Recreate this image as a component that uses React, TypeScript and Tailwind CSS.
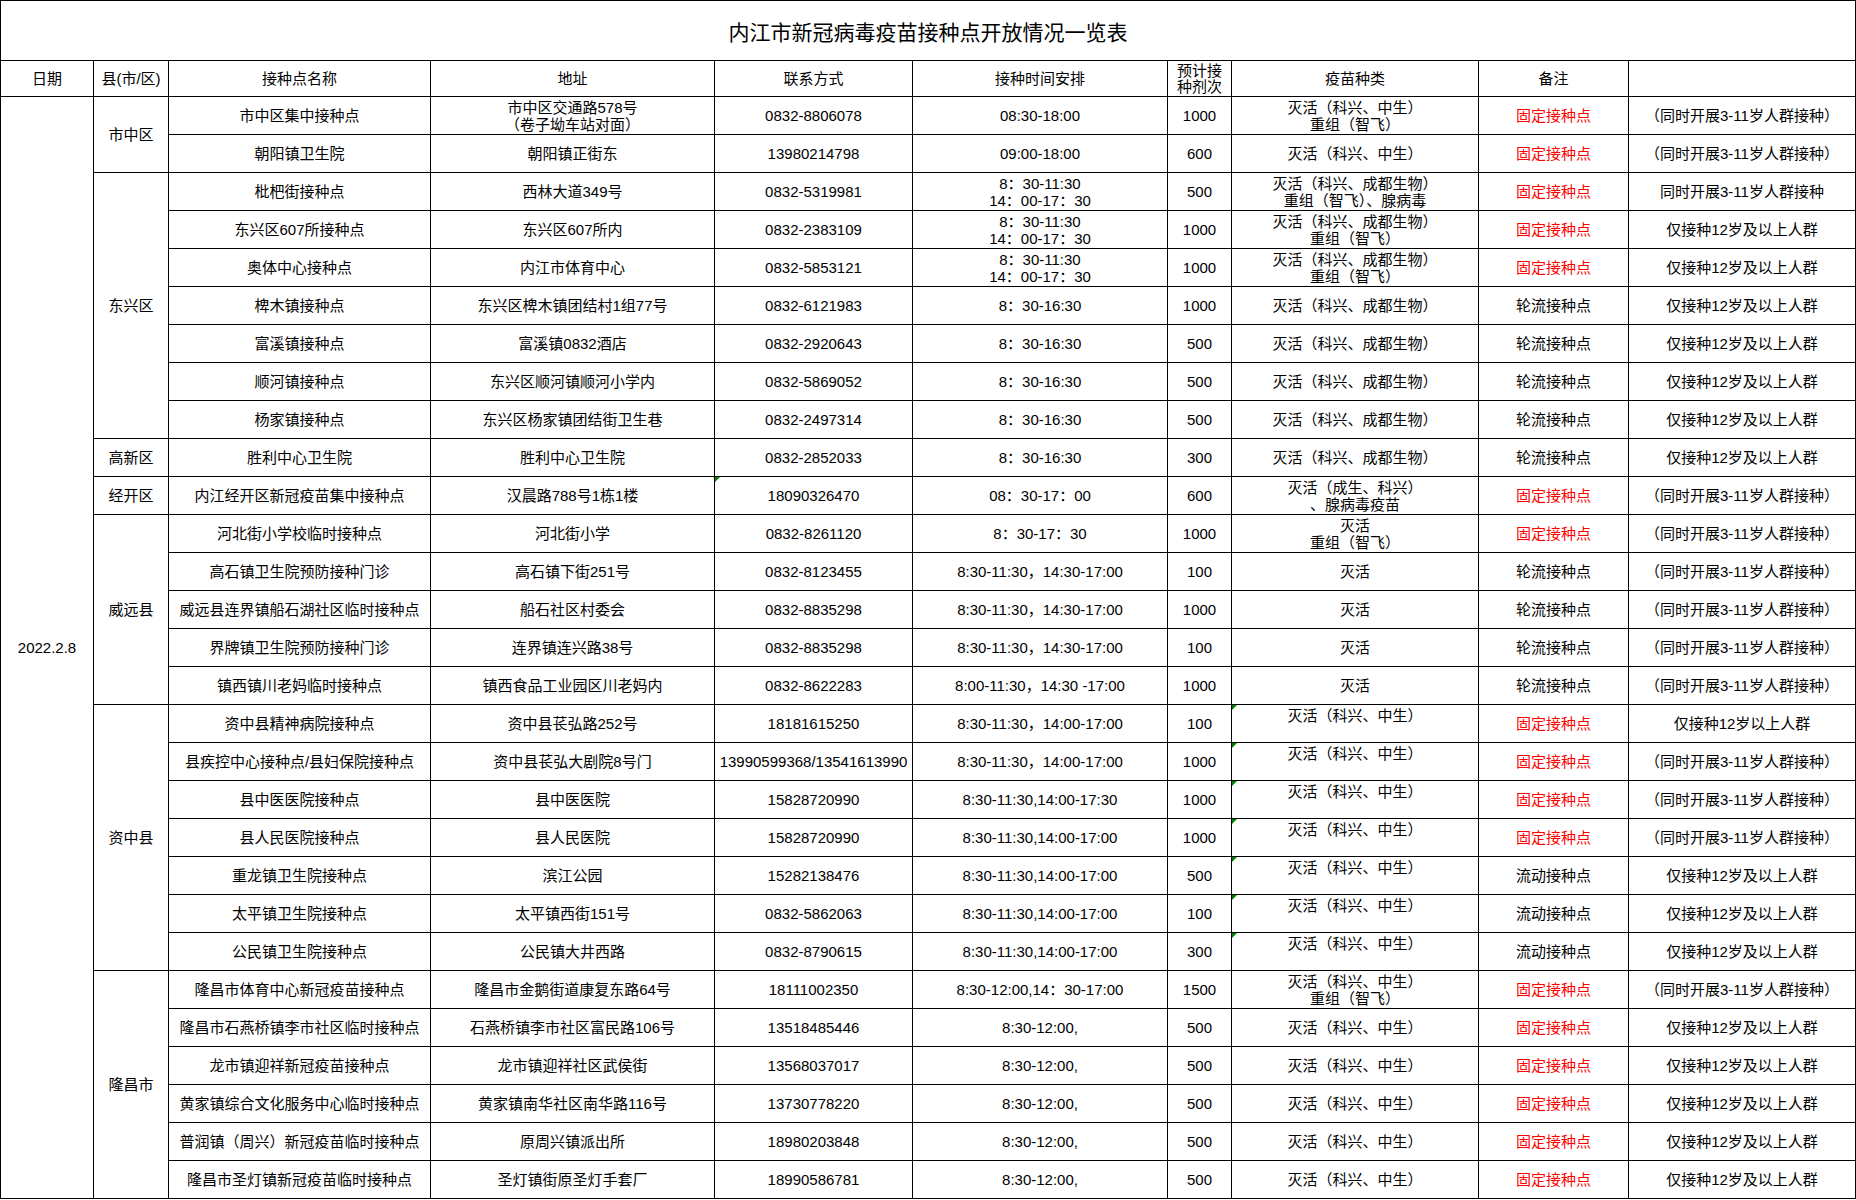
import React from 'react';

type Row = {
  name: string;
  addr: string[];
  tel: string;
  telMark?: boolean;
  time: string[];
  dose: string;
  vac: string[];
  vacMark?: boolean;
  kind: string;
  red?: boolean;
  note: string;
};

type Group = { county: string; span: string; rows: Row[] };

const KX_ZS = '灭活（科兴、中生）';
const KX_CD = '灭活（科兴、成都生物）';
const TONG = '（同时开展3-11岁人群接种）';
const JIN = '仅接种12岁及以上人群';
const GUDING = '固定接种点';
const LUNLIU = '轮流接种点';
const LIUDONG = '流动接种点';
const SPLIT = ['8：30-11:30', '14：00-17：30'];

const GROUPS: Group[] = [
  {
    county: '市中区',
    span: 'row-span-2',
    rows: [
      { name: '市中区集中接种点', addr: ['市中区交通路578号', '（卷子坳车站对面）'], tel: '0832-8806078', time: ['08:30-18:00'], dose: '1000', vac: [KX_ZS, '重组（智飞）'], kind: GUDING, red: true, note: TONG },
      { name: '朝阳镇卫生院', addr: ['朝阳镇正街东'], tel: '13980214798', time: ['09:00-18:00'], dose: '600', vac: [KX_ZS], kind: GUDING, red: true, note: TONG },
    ],
  },
  {
    county: '东兴区',
    span: 'row-span-7',
    rows: [
      { name: '枇杷街接种点', addr: ['西林大道349号'], tel: '0832-5319981', time: SPLIT, dose: '500', vac: [KX_CD, '重组（智飞）、腺病毒'], kind: GUDING, red: true, note: '同时开展3-11岁人群接种' },
      { name: '东兴区607所接种点', addr: ['东兴区607所内'], tel: '0832-2383109', time: SPLIT, dose: '1000', vac: [KX_CD, '重组（智飞）'], kind: GUDING, red: true, note: JIN },
      { name: '奥体中心接种点', addr: ['内江市体育中心'], tel: '0832-5853121', time: SPLIT, dose: '1000', vac: [KX_CD, '重组（智飞）'], kind: GUDING, red: true, note: JIN },
      { name: '椑木镇接种点', addr: ['东兴区椑木镇团结村1组77号'], tel: '0832-6121983', time: ['8：30-16:30'], dose: '1000', vac: [KX_CD], kind: LUNLIU, note: JIN },
      { name: '富溪镇接种点', addr: ['富溪镇0832酒店'], tel: '0832-2920643', time: ['8：30-16:30'], dose: '500', vac: [KX_CD], kind: LUNLIU, note: JIN },
      { name: '顺河镇接种点', addr: ['东兴区顺河镇顺河小学内'], tel: '0832-5869052', time: ['8：30-16:30'], dose: '500', vac: [KX_CD], kind: LUNLIU, note: JIN },
      { name: '杨家镇接种点', addr: ['东兴区杨家镇团结街卫生巷'], tel: '0832-2497314', time: ['8：30-16:30'], dose: '500', vac: [KX_CD], kind: LUNLIU, note: JIN },
    ],
  },
  {
    county: '高新区',
    span: 'row-span-1',
    rows: [
      { name: '胜利中心卫生院', addr: ['胜利中心卫生院'], tel: '0832-2852033', time: ['8：30-16:30'], dose: '300', vac: [KX_CD], kind: LUNLIU, note: JIN },
    ],
  },
  {
    county: '经开区',
    span: 'row-span-1',
    rows: [
      { name: '内江经开区新冠疫苗集中接种点', addr: ['汉晨路788号1栋1楼'], tel: '18090326470', telMark: true, time: ['08：30-17：00'], dose: '600', vac: ['灭活（成生、科兴）', '、腺病毒疫苗'], kind: GUDING, red: true, note: TONG },
    ],
  },
  {
    county: '威远县',
    span: 'row-span-5',
    rows: [
      { name: '河北街小学校临时接种点', addr: ['河北街小学'], tel: '0832-8261120', time: ['8：30-17：30'], dose: '1000', vac: ['灭活', '重组（智飞）'], kind: GUDING, red: true, note: TONG },
      { name: '高石镇卫生院预防接种门诊', addr: ['高石镇下街251号'], tel: '0832-8123455', time: ['8:30-11:30，14:30-17:00'], dose: '100', vac: ['灭活'], kind: LUNLIU, note: TONG },
      { name: '威远县连界镇船石湖社区临时接种点', addr: ['船石社区村委会'], tel: '0832-8835298', time: ['8:30-11:30，14:30-17:00'], dose: '1000', vac: ['灭活'], kind: LUNLIU, note: TONG },
      { name: '界牌镇卫生院预防接种门诊', addr: ['连界镇连兴路38号'], tel: '0832-8835298', time: ['8:30-11:30，14:30-17:00'], dose: '100', vac: ['灭活'], kind: LUNLIU, note: TONG },
      { name: '镇西镇川老妈临时接种点', addr: ['镇西食品工业园区川老妈内'], tel: '0832-8622283', time: ['8:00-11:30，14:30 -17:00'], dose: '1000', vac: ['灭活'], kind: LUNLIU, note: TONG },
    ],
  },
  {
    county: '资中县',
    span: 'row-span-7',
    rows: [
      { name: '资中县精神病院接种点', addr: ['资中县苌弘路252号'], tel: '18181615250', time: ['8:30-11:30，14:00-17:00'], dose: '100', vac: [KX_ZS, '\u00a0'], vacMark: true, kind: GUDING, red: true, note: '仅接种12岁以上人群' },
      { name: '县疾控中心接种点/县妇保院接种点', addr: ['资中县苌弘大剧院8号门'], tel: '13990599368/13541613990', time: ['8:30-11:30，14:00-17:00'], dose: '1000', vac: [KX_ZS, '\u00a0'], vacMark: true, kind: GUDING, red: true, note: TONG },
      { name: '县中医医院接种点', addr: ['县中医医院'], tel: '15828720990', time: ['8:30-11:30,14:00-17:30'], dose: '1000', vac: [KX_ZS, '\u00a0'], vacMark: true, kind: GUDING, red: true, note: TONG },
      { name: '县人民医院接种点', addr: ['县人民医院'], tel: '15828720990', time: ['8:30-11:30,14:00-17:00'], dose: '1000', vac: [KX_ZS, '\u00a0'], vacMark: true, kind: GUDING, red: true, note: TONG },
      { name: '重龙镇卫生院接种点', addr: ['滨江公园'], tel: '15282138476', time: ['8:30-11:30,14:00-17:00'], dose: '500', vac: [KX_ZS, '\u00a0'], vacMark: true, kind: LIUDONG, note: JIN },
      { name: '太平镇卫生院接种点', addr: ['太平镇西街151号'], tel: '0832-5862063', time: ['8:30-11:30,14:00-17:00'], dose: '100', vac: [KX_ZS, '\u00a0'], vacMark: true, kind: LIUDONG, note: JIN },
      { name: '公民镇卫生院接种点', addr: ['公民镇大井西路'], tel: '0832-8790615', time: ['8:30-11:30,14:00-17:00'], dose: '300', vac: [KX_ZS, '\u00a0'], vacMark: true, kind: LIUDONG, note: JIN },
    ],
  },
  {
    county: '隆昌市',
    span: 'row-span-6',
    rows: [
      { name: '隆昌市体育中心新冠疫苗接种点', addr: ['隆昌市金鹅街道康复东路64号'], tel: '18111002350', time: ['8:30-12:00,14：30-17:00'], dose: '1500', vac: [KX_ZS, '重组（智飞）'], kind: GUDING, red: true, note: TONG },
      { name: '隆昌市石燕桥镇李市社区临时接种点', addr: ['石燕桥镇李市社区富民路106号'], tel: '13518485446', time: ['8:30-12:00,'], dose: '500', vac: [KX_ZS], kind: GUDING, red: true, note: JIN },
      { name: '龙市镇迎祥新冠疫苗接种点', addr: ['龙市镇迎祥社区武侯街'], tel: '13568037017', time: ['8:30-12:00,'], dose: '500', vac: [KX_ZS], kind: GUDING, red: true, note: JIN },
      { name: '黄家镇综合文化服务中心临时接种点', addr: ['黄家镇南华社区南华路116号'], tel: '13730778220', time: ['8:30-12:00,'], dose: '500', vac: [KX_ZS], kind: GUDING, red: true, note: JIN },
      { name: '普润镇（周兴）新冠疫苗临时接种点', addr: ['原周兴镇派出所'], tel: '18980203848', time: ['8:30-12:00,'], dose: '500', vac: [KX_ZS], kind: GUDING, red: true, note: JIN },
      { name: '隆昌市圣灯镇新冠疫苗临时接种点', addr: ['圣灯镇街原圣灯手套厂'], tel: '18990586781', time: ['8:30-12:00,'], dose: '500', vac: [KX_ZS], kind: GUDING, red: true, note: JIN },
    ],
  },
];

// little green corner Excel draws on "number stored as text" cells
function Mark() {
  return <div className="absolute left-0 top-0 h-0 w-0 border-t-[5px] border-r-[5px] border-t-[#008000] border-r-transparent" />;
}

function Cell({ lines, mark, className = '' }: { lines: string[]; mark?: boolean; className?: string }) {
  return (
    <div className={`relative flex flex-col items-center justify-center bg-white text-center whitespace-nowrap ${className}`}>
      {mark && <Mark />}
      {lines.map((l, i) => (
        <div key={i}>{l}</div>
      ))}
    </div>
  );
}

const HEAD = ['日期', '县(市/区)', '接种点名称', '地址', '联系方式', '接种时间安排'];

export default function App() {
  return (
    <div className="min-h-[1200px] bg-white font-['Liberation_Sans','Noto_Sans_CJK_SC',sans-serif] text-[15px] leading-[17px] text-black">
      <div className="grid w-[1856px] grid-cols-[92px_74px_261px_283px_197px_254px_63px_246px_149px_226px] grid-rows-[59px_35px_repeat(29,37px)] gap-px bg-black p-px">
        <div className="col-span-10 flex items-center justify-center bg-white pt-1 text-[21px]">
          内江市新冠病毒疫苗接种点开放情况一览表
        </div>

        {HEAD.map((h) => (
          <Cell key={h} lines={[h]} />
        ))}
        <Cell lines={['预计接', '种剂次']} className="leading-[16px]" />
        <Cell lines={['疫苗种类']} />
        <Cell lines={['备注']} />
        <div className="bg-white" />

        {GROUPS.map((g, gi) =>
          g.rows.map((r, ri) => (
            <React.Fragment key={`${gi}-${ri}`}>
              {gi === 0 && ri === 0 && <Cell lines={['2022.2.8']} className="row-span-[29]" />}
              {ri === 0 && <Cell lines={[g.county]} className={g.span} />}
              <Cell lines={[r.name]} />
              <Cell lines={r.addr} />
              <Cell lines={[r.tel]} mark={r.telMark} />
              <Cell lines={r.time} />
              <Cell lines={[r.dose]} />
              <Cell lines={r.vac} mark={r.vacMark} />
              <Cell lines={[r.kind]} className={r.red ? 'text-[#ff0000]' : ''} />
              <Cell lines={[r.note]} />
            </React.Fragment>
          ))
        )}
      </div>
    </div>
  );
}
